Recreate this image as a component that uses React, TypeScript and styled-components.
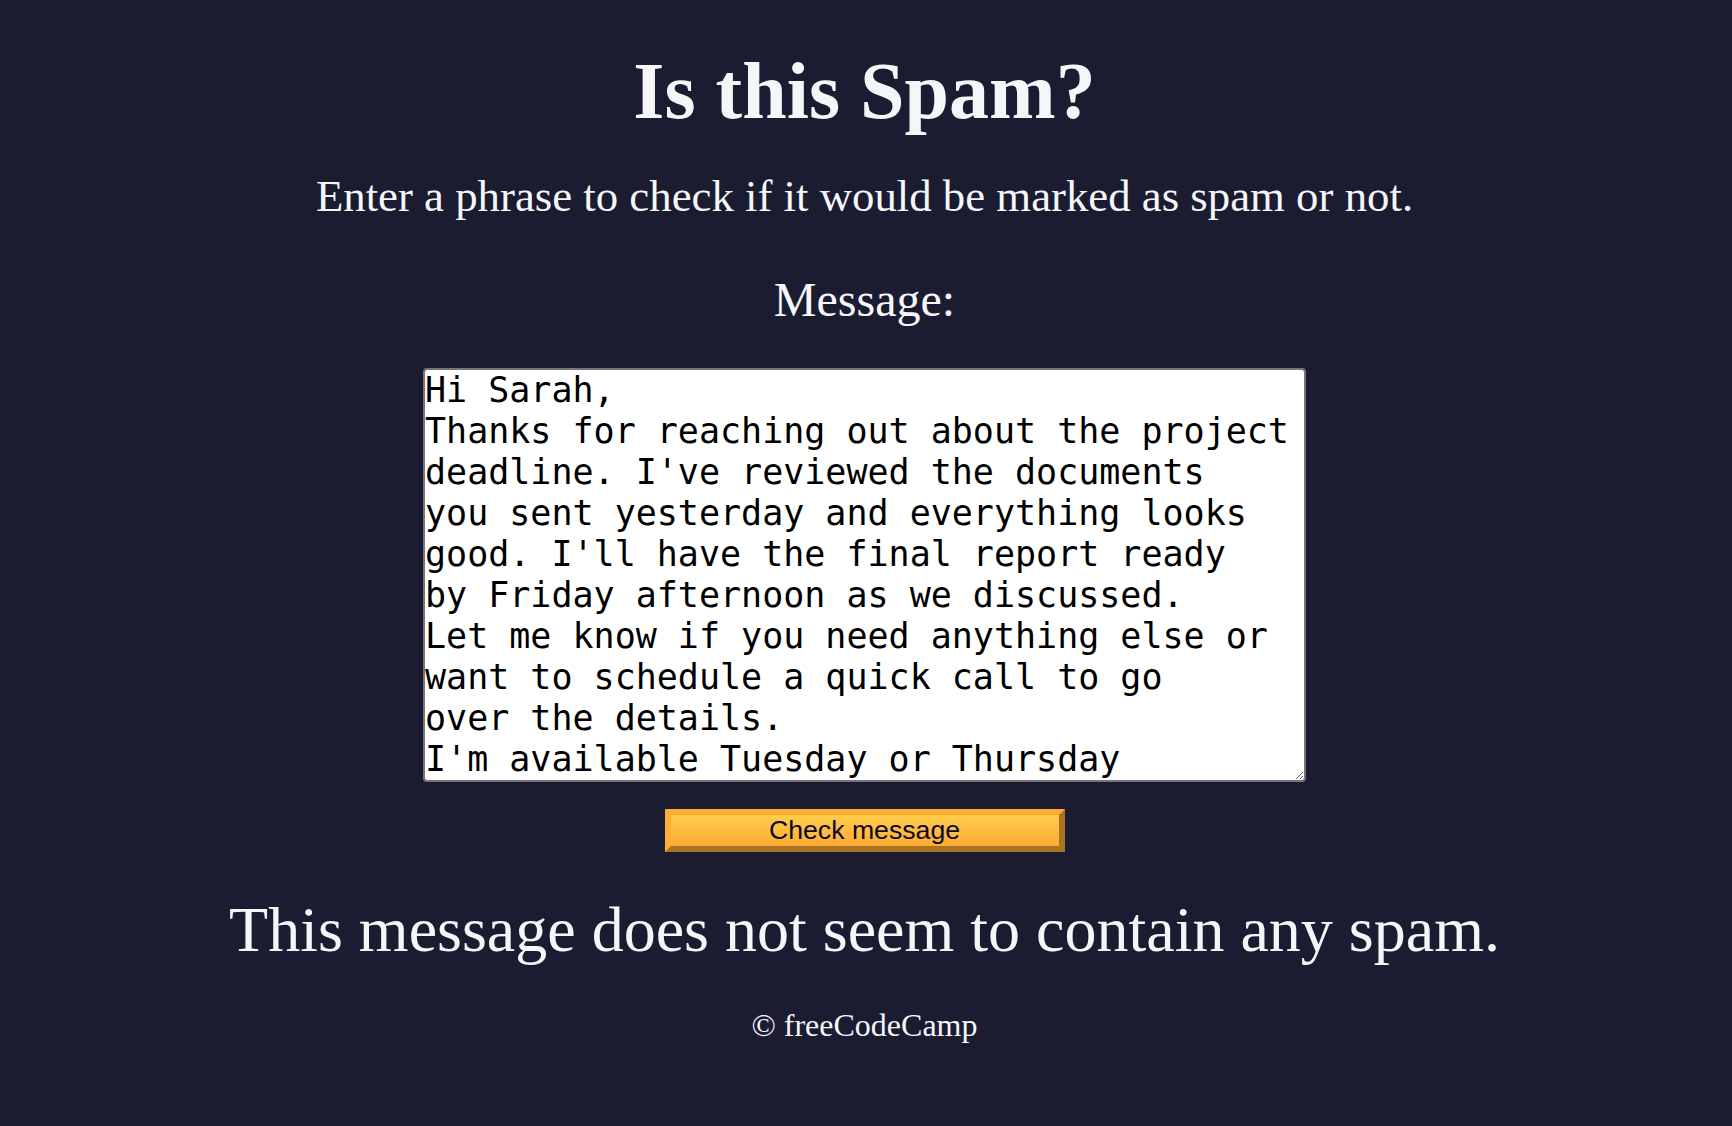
import React, { useState } from "react";
import styled, { createGlobalStyle } from "styled-components";

const GlobalStyle = createGlobalStyle`
  *, *::before, *::after {
    box-sizing: border-box;
  }
  html, body {
    margin: 0;
    padding: 0;
    background-color: #1b1b32;
  }
  body {
    min-height: 1126px;
    color: #f5f6f7;
    font-family: "Liberation Serif", "Times New Roman", serif;
  }
`;

const Page = styled.main`
  display: flex;
  flex-direction: column;
  align-items: center;
  text-align: center;
  padding: 46px 3px 0 0;
`;

const Title = styled.h1`
  margin: 0;
  font-size: 80px;
  font-weight: 700;
  line-height: normal;
`;

const Description = styled.p`
  margin: 33px 0 0;
  font-size: 44.8px;
  line-height: normal;
`;

const Form = styled.form`
  display: flex;
  flex-direction: column;
  align-items: center;
  margin-top: 50px;
`;

const Label = styled.label`
  display: block;
  font-size: 48px;
  line-height: normal;
`;

const MessageInput = styled.textarea`
  display: block;
  margin-top: 41px;
  width: 883px;
  height: 414px;
  padding: 0;
  border: 2px solid #767676;
  border-radius: 4px;
  background: #ffffff;
  color: #000000;
  font-family: "DejaVu Sans Mono", "Liberation Mono", monospace;
  font-size: 35px;
  line-height: 41px;
  scrollbar-width: none;
  &::-webkit-scrollbar {
    display: none;
  }
`;

const CheckButton = styled.button`
  margin-top: 27px;
  width: 400px;
  height: 43px;
  padding: 0;
  cursor: pointer;
  border: 6px outset #feac32;
  background-color: #feac32;
  background-image: linear-gradient(#fecc4c, #ffac33);
  color: #0a0a23;
  font-family: "Liberation Sans", Arial, sans-serif;
  font-size: 26.67px;
  line-height: 1;
`;

const Result = styled.p`
  margin: 41px 0 0;
  font-size: 64px;
  line-height: normal;
`;

const Footer = styled.footer`
  margin-top: 40px;
  font-size: 32px;
  line-height: normal;
`;

const initialMessage = [
  "Hi Sarah,",
  "Thanks for reaching out about the project",
  "deadline. I've reviewed the documents",
  "you sent yesterday and everything looks",
  "good. I'll have the final report ready",
  "by Friday afternoon as we discussed.",
  "Let me know if you need anything else or",
  "want to schedule a quick call to go",
  "over the details.",
  "I'm available Tuesday or Thursday",
  "afternoon.",
  "Best regards,",
  "Mark",
].join("\n");

export default function App() {
  const [message, setMessage] = useState(initialMessage);

  return (
    <>
      <GlobalStyle />
      <Page>
        <Title>Is this Spam?</Title>
        <Description>
          Enter a phrase to check if it would be marked as spam or not.
        </Description>
        <Form onSubmit={(e) => e.preventDefault()}>
          <Label htmlFor="message-input">Message:</Label>
          <MessageInput
            id="message-input"
            value={message}
            onChange={(e) => setMessage(e.target.value)}
          />
          <CheckButton type="submit">Check message</CheckButton>
        </Form>
        <Result>This message does not seem to contain any spam.</Result>
        <Footer>© freeCodeCamp</Footer>
      </Page>
    </>
  );
}
